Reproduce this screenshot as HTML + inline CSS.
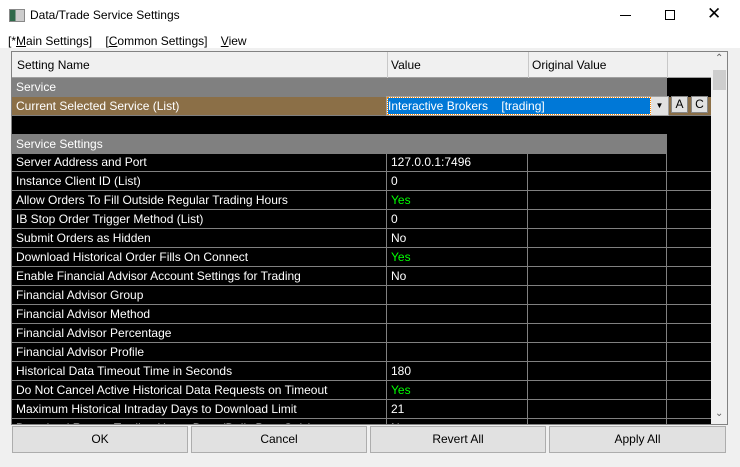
<html><head><style>
body{margin:0;width:740px;height:467px;background:#f0f0f0;font-family:"Liberation Sans",sans-serif;font-size:12px;position:relative;overflow:hidden}
.a{position:absolute}
.r{position:absolute;left:12px;height:18px;border-bottom:1px solid #808080;color:#fff;line-height:18px;white-space:nowrap}
.c{position:absolute;top:0;height:18px;padding-left:4px;overflow:hidden;border-right:1px solid #808080;box-sizing:border-box}
.b{position:absolute;top:426px;height:27px;background:#e1e1e1;border:1px solid #adadad;box-sizing:border-box;text-align:center;line-height:25px;color:#000}
</style></head><body>
<div class="a" style="left:0;top:0;width:740px;height:48px;background:#fff"></div>
<div class="a" style="left:9px;top:9px;width:14px;height:11px;border:1px solid #888;background:linear-gradient(90deg,#2f6a4a 0 40%,#ccc 40%)"></div>
<div class="a" style="left:30px;top:8px;font-size:12px">Data/Trade Service Settings</div>
<div class="a" style="left:620px;top:15px;width:11px;height:1px;background:#000"></div>
<div class="a" style="left:665px;top:10px;width:8px;height:8px;border:1px solid #000"></div>
<div class="a" style="left:707px;top:4px;font-size:17px;">✕</div>
<div class="a" style="left:8px;top:34px">[*<u>M</u>ain Settings]&nbsp;&nbsp;&nbsp;&nbsp;[<u>C</u>ommon Settings]&nbsp;&nbsp;&nbsp;&nbsp;<u>V</u>iew</div>
<div class="a" style="left:11px;top:51px;width:717px;height:374px;background:#000;border:1px solid #828282;box-sizing:border-box"></div>
<div class="a" style="left:12px;top:52px;width:699px;height:26px;background:#f0f0f0;border-bottom:1px solid #a0a0a0;box-sizing:border-box;line-height:26px">
<span class="a" style="left:5px">Setting Name</span><span class="a" style="left:375px;top:0;height:26px;border-left:1px solid #c8c8c8;padding-left:3px">Value</span><span class="a" style="left:516px;top:0;height:26px;border-left:1px solid #c8c8c8;padding-left:3px">Original Value</span><span class="a" style="left:655px;top:0;height:26px;border-left:1px solid #c8c8c8"></span></div>
<div class="a" style="left:711px;top:52px;width:16px;height:372px;background:#f0f0f0"></div>
<div class="a" style="left:713px;top:70px;width:13px;height:20px;background:#cdcdcd"></div>
<div class="a" style="left:715px;top:53px;font-size:10px;color:#606060">⌃</div>
<div class="a" style="left:715px;top:408px;font-size:10px;color:#606060">⌄</div>
<div class="r" style="top:78px;width:655px;background:#808080"><span class="c" style="width:655px;border:0">Service</span></div>
<div class="r" style="top:97px;width:699px;background:#8b6f47"><span class="c" style="width:375px">Current Selected Service (List)</span></div>
<div class="a" style="left:386px;top:96px;width:283px;height:20px;background:#fff;border:1px solid #a0a0a0;box-sizing:border-box"></div>
<div class="a" style="left:388px;top:98px;width:262px;height:16px;background:#0078d7;color:#fff;line-height:16px;outline:1px dotted #f80;font-size:12px">Interactive Brokers&nbsp;&nbsp;&nbsp;&nbsp;[trading]</div>
<div class="a" style="left:651px;top:97px;width:17px;height:18px;background:#e1e1e1;font-size:8px;text-align:center;line-height:18px">▼</div>
<div class="a" style="left:671px;top:96px;width:17px;height:17px;background:#e1e1e1;border:1px solid #888;box-sizing:border-box;text-align:center;line-height:15px">A</div>
<div class="a" style="left:691px;top:96px;width:17px;height:17px;background:#e1e1e1;border:1px solid #888;box-sizing:border-box;text-align:center;line-height:15px">C</div>
<div class="r" style="width:655px;background:#808080;border-top:1px solid #808080;top:134px"><span class="c" style="width:655px;border:0">Service Settings</span></div>
<div class="b" style="left:12px;width:176px">OK</div>
<div class="b" style="left:191px;width:176px">Cancel</div>
<div class="b" style="left:370px;width:176px">Revert All</div>
<div class="b" style="left:549px;width:177px">Apply All</div>
<div class="r" style="top:153px;width:699px"><span class="c" style="width:375px">Server Address and Port</span><span class="c" style="left:375px;width:141px">127.0.0.1:7496</span><span class="c" style="left:516px;width:139px"></span></div>
<div class="r" style="top:172px;width:699px"><span class="c" style="width:375px">Instance Client ID (List)</span><span class="c" style="left:375px;width:141px">0</span><span class="c" style="left:516px;width:139px"></span></div>
<div class="r" style="top:191px;width:699px"><span class="c" style="width:375px">Allow Orders To Fill Outside Regular Trading Hours</span><span class="c" style="left:375px;width:141px;color:#0f0">Yes</span><span class="c" style="left:516px;width:139px"></span></div>
<div class="r" style="top:210px;width:699px"><span class="c" style="width:375px">IB Stop Order Trigger Method (List)</span><span class="c" style="left:375px;width:141px">0</span><span class="c" style="left:516px;width:139px"></span></div>
<div class="r" style="top:229px;width:699px"><span class="c" style="width:375px">Submit Orders as Hidden</span><span class="c" style="left:375px;width:141px">No</span><span class="c" style="left:516px;width:139px"></span></div>
<div class="r" style="top:248px;width:699px"><span class="c" style="width:375px">Download Historical Order Fills On Connect</span><span class="c" style="left:375px;width:141px;color:#0f0">Yes</span><span class="c" style="left:516px;width:139px"></span></div>
<div class="r" style="top:267px;width:699px"><span class="c" style="width:375px">Enable Financial Advisor Account Settings for Trading</span><span class="c" style="left:375px;width:141px">No</span><span class="c" style="left:516px;width:139px"></span></div>
<div class="r" style="top:286px;width:699px"><span class="c" style="width:375px">Financial Advisor Group</span><span class="c" style="left:375px;width:141px"></span><span class="c" style="left:516px;width:139px"></span></div>
<div class="r" style="top:305px;width:699px"><span class="c" style="width:375px">Financial Advisor Method</span><span class="c" style="left:375px;width:141px"></span><span class="c" style="left:516px;width:139px"></span></div>
<div class="r" style="top:324px;width:699px"><span class="c" style="width:375px">Financial Advisor Percentage</span><span class="c" style="left:375px;width:141px"></span><span class="c" style="left:516px;width:139px"></span></div>
<div class="r" style="top:343px;width:699px"><span class="c" style="width:375px">Financial Advisor Profile</span><span class="c" style="left:375px;width:141px"></span><span class="c" style="left:516px;width:139px"></span></div>
<div class="r" style="top:362px;width:699px"><span class="c" style="width:375px">Historical Data Timeout Time in Seconds</span><span class="c" style="left:375px;width:141px">180</span><span class="c" style="left:516px;width:139px"></span></div>
<div class="r" style="top:381px;width:699px"><span class="c" style="width:375px">Do Not Cancel Active Historical Data Requests on Timeout</span><span class="c" style="left:375px;width:141px;color:#0f0">Yes</span><span class="c" style="left:516px;width:139px"></span></div>
<div class="r" style="top:400px;width:699px"><span class="c" style="width:375px">Maximum Historical Intraday Days to Download Limit</span><span class="c" style="left:375px;width:141px">21</span><span class="c" style="left:516px;width:139px"></span></div>
<div class="a" style="left:12px;top:419px;width:699px;height:5px;overflow:hidden;background:#000;color:#fff"><div class="r" style="top:0;left:0;width:699px;border:0"><span class="c" style="width:375px">Download Recent Trading Hours Data (Daily Bars Only)</span><span class="c" style="left:375px;width:141px">No</span><span class="c" style="left:516px;width:139px"></span></div></div>
<div class="a" style="left:0;top:458px;width:740px;height:9px;background:#f0f0f0"></div>
</body></html>
